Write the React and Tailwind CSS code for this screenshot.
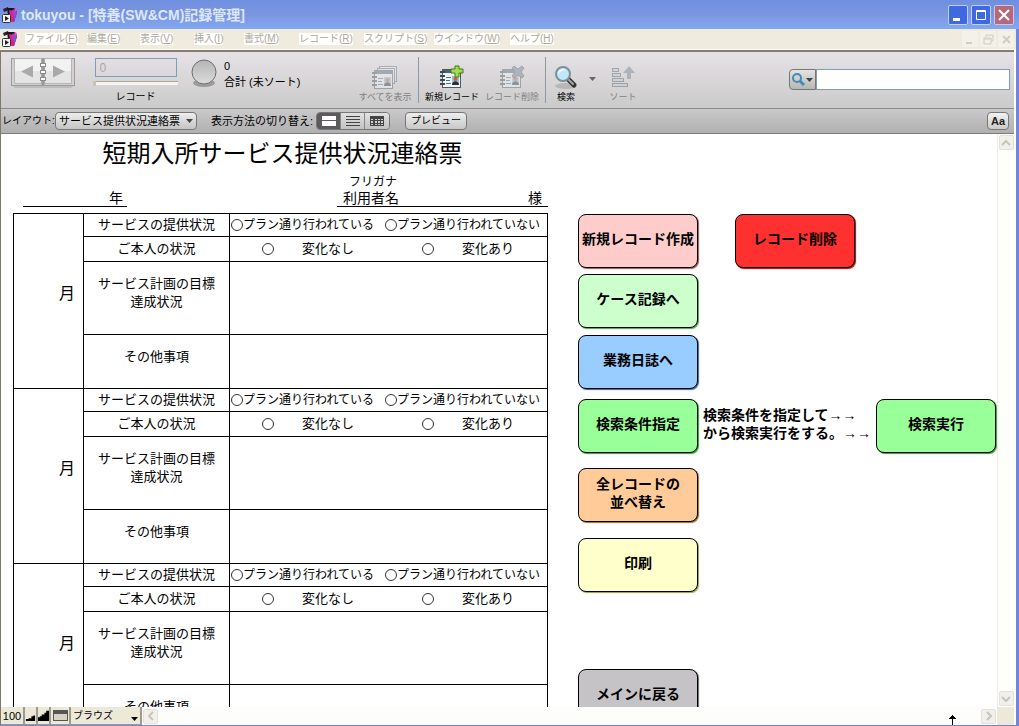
import React, { useState } from "react";
import clsx from "clsx";

const MENUS = [
  { label: "ファイル", accel: "F" },
  { label: "編集", accel: "E" },
  { label: "表示", accel: "V" },
  { label: "挿入", accel: "I" },
  { label: "書式", accel: "M" },
  { label: "レコード", accel: "R" },
  { label: "スクリプト", accel: "S" },
  { label: "ウインドウ", accel: "W" },
  { label: "ヘルプ", accel: "H" },
];

const RECORDS = [1, 2, 3];

// ICONS
const AppIcon = ({ size }) => (
  <svg width={size} height={size} viewBox="0 0 16 16">
    <path d="M1 2l5-2 1 3-5 2z" fill="#2a2030" />
    <path d="M5 1h8l2 4-3 10H7z" fill="#1c1420" />
    <path d="M7 3l4 1 1 11H9z" fill="#e0218a" />
    <path d="M10 3l4-1 1 4-3 9z" fill="#a044c8" />
    <path d="M12 1l3 1-1 3z" fill="#ff5aa8" />
    <rect x="0.500" y="7.500" width="8" height="8" rx="1" fill="#f4f4f4" stroke="#333" />
    <path d="M3 9v5l4-2.500z" fill="#222" />
  </svg>
);

const BookIcon = () => (
  <svg width="66" height="30" viewBox="0 0 66 30">
    <path d="M1 27h64l-4 3H5z" fill="#bcbcbc" />
    <rect x="1.500" y="0.500" width="63" height="27" fill="#d2d2d2" stroke="#9c9c9c" />
    <path d="M4.500 0.500h27v25h-27zM34.500 0.500h27v25h-27z" fill="#f2f2f2" stroke="#b4b4b4" />
    <path d="M5 13h26v12H5zM35 13h26v12H35z" fill="#e4e4e4" />
    <path d="M11 13.500l12-6v12zM55 13.500l-12-6v12z" fill="#a9a9a9" />
    <path d="M33 1v26" stroke="#999" strokeWidth="3" />
    <g fill="#fff" stroke="#8c8c8c">
      <rect x="30.500" y="5.500" width="5" height="3" />
      <rect x="30.500" y="12.500" width="5" height="3" />
      <rect x="30.500" y="19.500" width="5" height="3" />
    </g>
  </svg>
);

const BallIcon = () => (
  <svg width="28" height="30" viewBox="0 0 28 30">
    <defs>
      <linearGradient id="ball" x1="0" y1="0" x2="0" y2="1">
        <stop offset="0" stopColor="#b4b4b4" />
        <stop offset="1" stopColor="#dcdcdc" />
      </linearGradient>
    </defs>
    <ellipse cx="14" cy="25" rx="11" ry="4" fill="#777" opacity="0.6" />
    <circle cx="14" cy="14" r="12" fill="url(#ball)" stroke="#707070" />
  </svg>
);

const Card = ({ x = 0, y = 0 }) => (
  <g transform={`translate(${x} ${y})`}>
    <rect x="2.500" y="0.500" width="18" height="18" fill="#f2f6f8" stroke="#4b5a66" />
    <path d="M2 1h19v3H2z" fill="#4f6472" />
    <path d="M0 3h5M0 7h5M0 11h5M0 15h5" stroke="#3d4a54" strokeWidth="2" />
    <path d="M6 8.500h5M6 11.500h4M6 14.500h5" stroke="#3f7690" />
    <rect x="12" y="7" width="7" height="9" fill="#9cc0d8" />
    <circle cx="15.500" cy="10" r="2" fill="#c9642e" />
    <path d="M12 16c0-5 7-5 7 0z" fill="#26303a" />
  </g>
);

const ShowAllIcon = () => (
  <svg width="26" height="24" viewBox="0 0 26 24">
    <g fill="#eef2f4" stroke="#5b6a76">
      <rect x="7.500" y="1.500" width="17" height="15" />
      <rect x="5.500" y="3.500" width="17" height="15" />
    </g>
    <Card x={0} y={5} />
  </svg>
);

const NewIcon = () => (
  <svg width="26" height="24" viewBox="0 0 26 24">
    <Card x={1} y={4} />
    <path d="M16 1h4v3h4v4h-4v4h-4V8h-4V4h4z" fill="#a4dc50" stroke="#3f7a18" />
  </svg>
);

const DeleteIcon = () => (
  <svg width="26" height="24" viewBox="0 0 26 24">
    <Card x={1} y={4} />
    <path d="M13 3l2-2 4 3 4-3 2 2-3 4 3 4-2 2-4-3-4 3-2-2 3-4z" fill="#6d7b8c" stroke="#4a5663" />
  </svg>
);

const FindIcon = () => (
  <svg width="26" height="24" viewBox="0 0 26 24">
    <ellipse cx="13" cy="21" rx="11" ry="3" fill="#999" opacity="0.5" />
    <path d="M15 14l6 6" stroke="#333" strokeWidth="5" strokeLinecap="round" />
    <path d="M16 15l4 4" stroke="#aaa" strokeWidth="2" strokeLinecap="round" />
    <circle cx="10" cy="9" r="7" fill="#bfe9f8" stroke="#7c8f9c" strokeWidth="2" />
    <path d="M5 9c0-4 5-6 8-4-3 0-6 1-8 4z" fill="#fff" />
  </svg>
);

const SortIcon = () => (
  <svg width="26" height="24" viewBox="0 0 26 24">
    <g fill="#c4ccd4" stroke="#4a5866">
      <rect x="2.500" y="3.500" width="6" height="3" />
      <rect x="2.500" y="8.500" width="8" height="3" />
      <rect x="2.500" y="13.500" width="11" height="3" />
      <rect x="2.500" y="18.500" width="15" height="3" />
    </g>
    <path d="M17 14V8h-4l6-7 6 7h-4v6z" fill="#6d7b8c" />
  </svg>
);

const Triangle = ({ className }) => (
  <svg width="7" height="4" viewBox="0 0 7 4" className={className}>
    <path d="M0 0h7L3.500 4z" fill="currentColor" />
  </svg>
);

const Chevron = ({ d }) => (
  <svg width="10" height="10" viewBox="0 0 10 10">
    <path d={d} fill="none" stroke="#c6c5bb" strokeWidth="2" />
  </svg>
);

const ToolButton = ({ icon, label, className, disabled }) => (
  <button
    disabled={disabled}
    className={clsx("mt-px flex flex-col items-center whitespace-nowrap text-[9px] leading-4", className, disabled && "opacity-40")}
  >
    {icon}
    {label}
  </button>
);

const ScrollButton = ({ d, label }) => (
  <button
    aria-label={label}
    className="flex size-[15px] shrink-0 items-center justify-center rounded-xs border border-[#e4e2d8] bg-[#f1f0ea]"
  >
    <Chevron d={d} />
  </button>
);

const FormButton = ({ color, children }) => (
  <button
    className={clsx("h-[54px] w-[120px] shrink-0 rounded-lg border border-black pb-1 text-sm leading-[18px] font-bold", color)}
  >
    {children}
  </button>
);

const Radio = ({ name, label, className }) => (
  <label className={clsx("flex items-center whitespace-nowrap", className)}>
    <input
      type="radio"
      name={name}
      className="size-3 shrink-0 appearance-none rounded-full border border-[#333] bg-white checked:bg-black"
    />
    {label}
  </label>
);

// One month of the form
const RecordRows = ({ id }) => (
  <tbody>
    <tr className="h-[23px]">
      <th rowSpan={4} className="border border-black pt-[68px] pr-2 text-right align-top text-base font-normal">
        月
      </th>
      <th className="border border-black text-[13px] leading-4 font-normal">サービスの提供状況</th>
      <td className="border border-black text-xs leading-4">
        <div className="grid grid-cols-[154px_1fr] pl-px">
          <Radio name={`plan-${id}`} label="プラン通り行われている" />
          <Radio name={`plan-${id}`} label="プラン通り行われていない" />
        </div>
      </td>
    </tr>
    <tr className="h-[25px]">
      <th className="border border-black text-[13px] leading-4 font-normal">ご本人の状況</th>
      <td className="border border-black text-[13px] leading-4">
        <div className="grid grid-cols-[160px_1fr] pl-8">
          <Radio name={`change-${id}`} label="変化なし" className="gap-7" />
          <Radio name={`change-${id}`} label="変化あり" className="gap-7" />
        </div>
      </td>
    </tr>
    <tr className="h-[73px]">
      <th className="border border-black pt-[13px] align-top text-[13px] leading-[18px] font-normal">
        サービス計画の目標
        <br />
        達成状況
      </th>
      <td className="border border-black" />
    </tr>
    <tr className="h-[54px]">
      <th className="border border-black pt-[13px] align-top text-[13px] leading-[18px] font-normal">その他事項</th>
      <td className="border border-black" />
    </tr>
  </tbody>
);

const TitleBar = () => (
  <header className="flex h-[29px] shrink-0 items-center bg-linear-to-b from-[#6f8fdf] via-[#7b96e1] to-[#83a8f2] pr-[5px] pl-[2px]">
    <AppIcon size={16} />
    <h1 className="ml-[3px] flex-1 text-sm leading-4 font-bold text-[#dce8fb]">tokuyou - [特養(SW&amp;CM)記録管理]</h1>
    <div className="flex gap-[3px]">
      <button aria-label="最小化" className="size-5 rounded-xs border border-[#c3d0f6] bg-[#3f69e0]">
        <svg viewBox="0 0 18 18">
          <path d="M4 12h7v3H4z" fill="#fff" />
        </svg>
      </button>
      <button aria-label="最大化" className="size-5 rounded-xs border border-[#c3d0f6] bg-[#3f69e0]">
        <svg viewBox="0 0 18 18">
          <path d="M4.500 4.500h9v9h-9zM4 5.500h10" fill="none" stroke="#fff" />
        </svg>
      </button>
      <button aria-label="閉じる" className="size-5 rounded-xs border border-[#d4c3dc] bg-[#b4687c]">
        <svg viewBox="0 0 18 18">
          <path d="M4 4l10 10M14 4L4 14" stroke="#fff" strokeWidth="2" />
        </svg>
      </button>
    </div>
  </header>
);

const MenuBar = () => (
  <nav className="flex h-[21px] shrink-0 items-center border-b border-[#fcfbf6] bg-[#efebde] pl-[2px]">
    <AppIcon size={16} />
    <div className="ml-[7px] grid flex-1 grid-cols-[62px_53px_54px_50px_55px_65px_70px_76px_1fr] justify-items-start text-[10px] leading-3 text-[#aca899]">
      {MENUS.map((menu) => (
        <button key={menu.accel} className="bg-white whitespace-nowrap">
          {menu.label}(<u>{menu.accel}</u>)
        </button>
      ))}
    </div>
    <div className="flex gap-[2px] pr-[2px]">
      {["M4 12h6", "M4 7h7v6H4zM6 6V4h7v6h-2M4 8h7", "M5 5l7 7M12 5l-7 7"].map((d, i) => (
        <button key={d} aria-label={["子ウインドウを最小化", "元に戻す", "子ウインドウを閉じる"][i]} className="size-4 bg-[#f3f1e8]">
          <svg viewBox="0 0 16 16">
            <path d={d} fill="none" stroke="#d0cec4" strokeWidth={i === 1 ? 1 : 2} />
          </svg>
        </button>
      ))}
    </div>
  </nav>
);

const Toolbar = () => (
  <div className="flex h-14 shrink-0 items-start bg-linear-to-b from-[#e6e1e5] to-[#cbcbcb] pr-1 pl-[9px]">
    <div className="flex w-[346px] shrink-0 items-start pt-1.5">
      <button aria-label="前後のレコード" className="w-[66px]">
        <BookIcon />
      </button>
      <div className="ml-[17px] flex w-[85px] flex-col items-center">
        <input
          id="record"
          defaultValue="0"
          className="h-[19px] w-[82px] border border-[#7f9db9] px-1 text-xs text-[#aca899]"
        />
        <input
          type="range"
          aria-label="レコード位置"
          defaultValue="0"
          className="mt-1 h-[4px] w-full appearance-none border-t border-[#aaa69a] bg-[#f6f4ec] [&::-webkit-slider-thumb]:h-[5px] [&::-webkit-slider-thumb]:w-[3px] [&::-webkit-slider-thumb]:appearance-none [&::-webkit-slider-thumb]:bg-[#c8c4b4]"
        />
        <label htmlFor="record" className="mt-1 text-[10px] leading-4">
          レコード
        </label>
      </div>
      <div className="ml-3">
        <BallIcon />
      </div>
      <p className="ml-1.5 text-[11px] leading-4">
        0<br />
        合計 (未ソート)
      </p>
    </div>
    <div className="flex flex-1 items-start pt-3">
      <ToolButton icon={<ShowAllIcon />} label="すべてを表示" className="w-[58px]" disabled />
      <span className="-mt-[7px] ml-1 h-[46px] w-px shrink-0 bg-[#8e97a5]" />
      <ToolButton icon={<NewIcon />} label="新規レコード" className="ml-[3px] w-[60px]" />
      <ToolButton icon={<DeleteIcon />} label="レコード削除" className="w-[60px]" disabled />
      <span className="-mt-[7px] ml-[3px] h-[46px] w-px shrink-0 bg-[#8e97a5]" />
      <ToolButton icon={<FindIcon />} label="検索" className="w-10" />
      <button aria-label="検索メニュー" className="mt-[13px] ml-[3px] text-[#666]">
        <Triangle />
      </button>
      <ToolButton icon={<SortIcon />} label="ソート" className="ml-[7px] w-10" disabled />
    </div>
    <div className="mt-[17px] flex h-[21px]">
      <button
        aria-label="クイック検索"
        className="flex w-[27px] items-center justify-center gap-px rounded-l-sm border border-[#777] bg-linear-to-b from-[#e4e4e4] to-[#b6b6b6] text-[#444]"
      >
        <svg width="13" height="13" viewBox="0 0 13 13" fill="none" stroke="#3f8db5">
          <circle cx="5" cy="5" r="4" strokeWidth="2" />
          <path d="M8 8l4 4" strokeWidth="3" />
        </svg>
        <Triangle />
      </button>
      <input type="search" aria-label="検索" className="w-[194px] border border-[#7f9db9] bg-white px-1 text-xs" />
    </div>
  </div>
);

const LayoutBar = ({ view, setView }) => (
  <div className="flex h-[26px] shrink-0 items-center border-t border-b border-t-[#8a8a8a] border-b-[#7c7c7c] bg-linear-to-b from-[#cbc9cb] to-[#b0b0b0] pr-[5px] pl-px text-[11px] leading-4">
    <label htmlFor="layout" className="w-[53px] text-[10px] whitespace-nowrap">
      レイアウト:
    </label>
    <div className="relative flex">
      <select
        id="layout"
        className="h-[18px] w-[142px] appearance-none rounded-sm border border-[#777] bg-linear-to-b from-[#eee] to-[#c4c4c4] pl-[3px]"
      >
        <option>サービス提供状況連絡票</option>
      </select>
      <Triangle className="pointer-events-none absolute top-[7px] right-1 text-[#444]" />
    </div>
    <span className="ml-[14px] whitespace-nowrap">表示方法の切り替え:</span>
    <div className="ml-[3px] flex h-[18px] overflow-hidden rounded-sm border border-[#777]">
      {["form", "list", "table"].map((name) => (
        <button
          key={name}
          aria-label={name}
          onClick={() => setView(name)}
          className={clsx(
            "flex w-6 items-center justify-center border-r border-[#888] last:border-r-0",
            view === name ? "bg-[#5c5a5c] text-white" : "bg-linear-to-b from-[#e2e2e2] to-[#c2c2c2] text-[#444]"
          )}
        >
          <svg width="14" height="10" viewBox="0 0 14 10">
            {name === "form" && <path d="M0 0h14v4H0zM0 5h14v5H0z" fill="currentColor" />}
            {name === "list" && <path d="M0 0.500h14M0 3.500h14M0 6.500h14M0 9.500h14" stroke="currentColor" />}
            {name === "table" && (
              <path d="M0 0h14v10H0zM1 3v1h2V3zM5 3v1h2V3zM8 3v1h2V3zM11 3v1h2V3zM1 5v2h2V5zM5 5v2h2V5zM8 5v2h2V5zM11 5v2h2V5zM1 8v1h2V8zM5 8v1h2V8zM8 8v1h2V8zM11 8v1h2V8z" fillRule="evenodd" fill="currentColor" />
            )}
          </svg>
        </button>
      ))}
    </div>
    <button className="ml-[15px] h-[18px] w-[62px] rounded-sm border border-[#777] bg-linear-to-b from-[#eee] to-[#c8c8c8] text-[10px]">
      プレビュー
    </button>
    <button className="ml-auto h-[18px] w-[22px] rounded-sm border border-[#777] bg-linear-to-b from-[#f2f2f2] to-[#ccc] font-bold text-[#222]">
      Aa
    </button>
  </div>
);

const StatusBar = () => (
  <footer className="relative flex h-[18px] shrink-0 items-center bg-[#fdfdfb]">
    <button className="h-full w-6 border-r-2 border-b border-[#9d9a8c] bg-[#ece9d8] text-[11px] leading-4">100</button>
    <button aria-label="縮小" className="flex h-full w-[13px] items-center border-r-2 border-b border-[#9d9a8c] bg-[#ece9d8]">
      <svg viewBox="0 0 12 14">
        <path d="M1 13v-2h3v-1h3V8h2V7h2v6z" />
      </svg>
    </button>
    <button aria-label="拡大" className="flex h-full w-[13px] items-center border-r-2 border-b border-[#9d9a8c] bg-[#ece9d8]">
      <svg viewBox="0 0 12 14">
        <path d="M0 13V9h2V8h2V6h3V4h2V2h3v11z" />
      </svg>
    </button>
    <button aria-label="ステータスエリア" className="flex h-full w-5 items-center justify-center border-r-2 border-b border-[#9d9a8c] bg-[#ece9d8]">
      <svg width="15" height="11" viewBox="0 0 15 11">
        <path d="M0 0h15v11H0z" fill="#555" />
        <path d="M1 4h13v6H1z" fill="#d6d3c4" />
      </svg>
    </button>
    <div className="relative flex h-full">
      <select
        aria-label="モード"
        className="h-full w-[71px] appearance-none border-r-2 border-b border-[#9d9a8c] bg-[#ece9d8] pl-[2px] text-[10px]"
      >
        <option>ブラウズ</option>
      </select>
      <Triangle className="pointer-events-none absolute right-1 bottom-1" />
    </div>
    <div className="flex flex-1 items-center justify-between px-px">
      <ScrollButton label="左へ" d="M7 1L3 5l4 4" />
      <ScrollButton label="右へ" d="M3 1l4 4-4 4" />
    </div>
    <span className="h-full w-[17px] bg-[#ece9d8]" />
    <svg width="9" height="10" viewBox="0 0 9 10" className="absolute right-[57px] bottom-0">
      <path d="M4 0h1v1h1v1h1v1h1v1H5v6H4V4H1V3h1V2h1V1h1z" />
    </svg>
  </footer>
);

const App = () => {
  const [view, setView] = useState("form");

  return (
    <div className="flex h-screen flex-col overflow-hidden border-b border-[#6f86dd] bg-white font-['Liberation_Sans','Noto_Sans_CJK_JP',sans-serif] text-black">
      <TitleBar />

      <div className="flex min-h-0 flex-1 flex-col border-r-[3px] border-r-[#6f86dd]">
        <MenuBar />

        <div className="mr-[2px] flex min-h-0 flex-1 flex-col border-t-2 border-l border-t-[#857d72] border-l-[#80786c]">
          <Toolbar />
          <LayoutBar view={view} setView={setView} />

          <div className="flex min-h-0 flex-1">
            <main className="flex min-w-0 flex-1 items-start overflow-auto pl-3 [scrollbar-width:none]">

              {/* FORM */}
              <section className="w-[535px] shrink-0">
                <h2 className="h-10 pl-1 text-center text-2xl leading-10">短期入所サービス提供状況連絡票</h2>
                <div className="mb-1.5 flex h-[33px] items-end justify-between pl-2.5">
                  <p className="w-[104px] border-b border-black pr-1 text-right text-sm leading-4">年</p>
                  <div className="w-[211px] border-b border-black">
                    <p className="pl-3 text-xs leading-4">フリガナ</p>
                    <p className="flex justify-between px-1.5 text-sm leading-4">
                      <span>利用者名</span>
                      <span>様</span>
                    </p>
                  </div>
                </div>
                <table className="w-full table-fixed border-collapse">
                  <colgroup>
                    <col className="w-[70px]" />
                    <col className="w-[146px]" />
                    <col />
                  </colgroup>
                  {RECORDS.map((id) => (
                    <RecordRows key={id} id={id} />
                  ))}
                </table>
              </section>

              {/* BUTTONS */}
              <section className="ml-[30px] flex flex-col pt-20">
                <div className="flex gap-[37px]">
                  <FormButton color="bg-[#ffcccc] shadow-[1px_1px_1px_#995555]">新規レコード作成</FormButton>
                  <FormButton color="bg-[#ff3030] shadow-[1px_1px_1px_#aa0000]">レコード削除</FormButton>
                </div>
                <div className="mt-1.5">
                  <FormButton color="bg-[#ccffcc] shadow-[1px_1px_1px_#559955]">ケース記録へ</FormButton>
                </div>
                <div className="mt-[7px]">
                  <FormButton color="bg-[#99ccff] shadow-[1px_1px_1px_#336699]">業務日誌へ</FormButton>
                </div>
                <div className="mt-2.5 flex items-center">
                  <FormButton color="bg-[#99ff99] shadow-[1px_1px_1px_#339933]">検索条件指定</FormButton>
                  <p className="mx-[5px] pb-1 text-sm leading-[18px] font-bold whitespace-nowrap">
                    検索条件を指定して→→
                    <br />
                    から検索実行をする。→→
                  </p>
                  <FormButton color="bg-[#99ff99] shadow-[1px_1px_1px_#339933]">検索実行</FormButton>
                </div>
                <div className="mt-[15px]">
                  <FormButton color="bg-[#ffcc99] shadow-[1px_1px_1px_#996633]">
                    全レコードの
                    <br />
                    並べ替え
                  </FormButton>
                </div>
                <div className="mt-4">
                  <FormButton color="bg-[#ffffcc] shadow-[1px_1px_1px_#999955]">印刷</FormButton>
                </div>
                <div className="mt-[77px]">
                  <FormButton color="bg-[#c6c3c6] shadow-[1px_1px_1px_#666666]">メインに戻る</FormButton>
                </div>
              </section>
            </main>

            <div className="flex w-[17px] shrink-0 flex-col items-center justify-between border-l border-[#eeede5] bg-[#fefefb] py-px">
              <ScrollButton label="上へ" d="M1 7l4-4 4 4" />
              <ScrollButton label="下へ" d="M1 3l4 4 4-4" />
            </div>
          </div>

          <StatusBar />
        </div>
      </div>
    </div>
  );
};

export default App;
